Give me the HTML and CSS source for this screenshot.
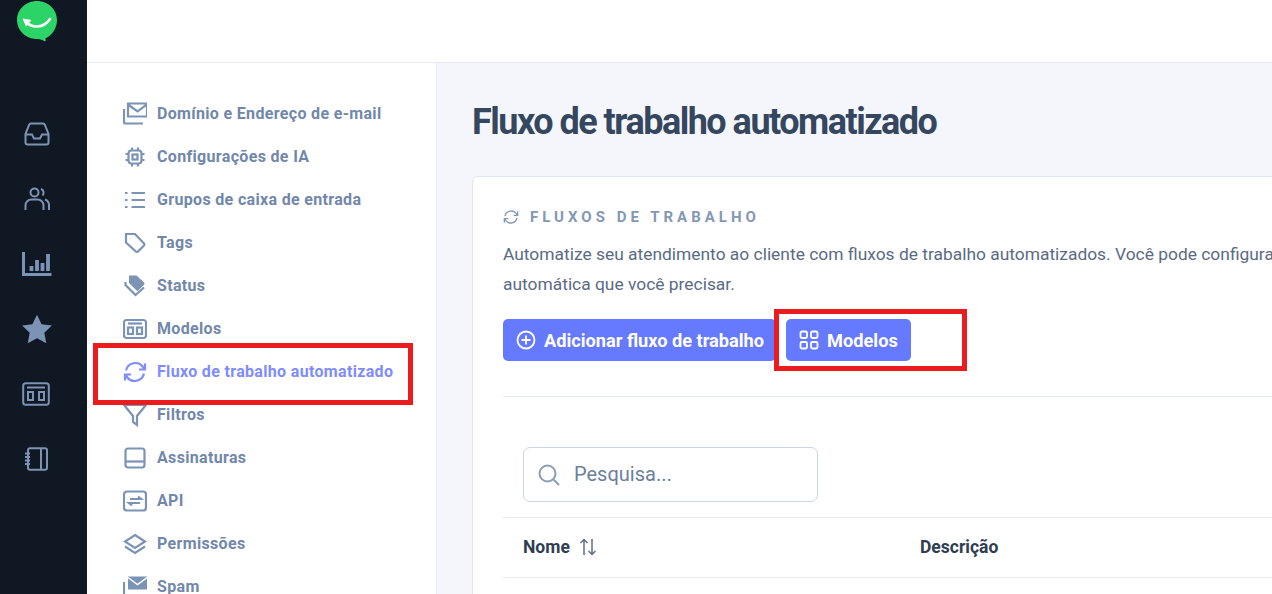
FILE: index.html
```html
<!DOCTYPE html>
<html lang="pt-BR">

<head>
    <meta charset="UTF-8">
    <meta name="viewport" content="width=device-width, initial-scale=1.0">
    <title>Fluxo de trabalho automatizado</title>
    <link rel="stylesheet" href="styles.css">
</head>

<body>
    <div class="app">
        <aside class="rail">
            <svg class="logo" viewBox="0 0 40 42">
                <path d="M20 1C9 1 0 9.500 0 20c0 10.500 9 19 20 19 4 0 5 1 7.500 2.200 .8 .2 1.500-.5 1.200-1.500l-.4-1.200C35 35.500 40 28.500 40 20 40 9.500 31 1 20 1z" fill="#2cd366"/>
                <path d="M9 22c6 6 17 7 24-3" fill="none" stroke="#fff" stroke-width="2.600" stroke-linecap="round"/>
                <path d="M5.500 18.500l9 1.500-5.500 6.500z" fill="#fff"/>
            </svg>
            <nav class="rail-icons">
                <svg viewBox="0 0 26 26"><path d="M7 2.500h12a2 2 0 0 1 1.800 1.200L24.500 13v8.500a2 2 0 0 1-2 2h-19a2 2 0 0 1-2-2V13L5.200 3.700A2 2 0 0 1 7 2.500zM1.500 13.500H8l2 4h6l2-4h6.500"/></svg>
                <svg viewBox="0 0 26 26"><circle cx="10.500" cy="6.500" r="4"/><path d="M1.500 24v-4.500a6 6 0 0 1 6-6h6a6 6 0 0 1 6 6V24M17 3a4 4 0 0 1 1.500 6.500M21 13.500a6 6 0 0 1 4 5.500v5"/></svg>
                <svg viewBox="0 0 30 26" class="rail-wide"><path d="M1.500 1v22.500h28" stroke-width="3"/><path d="M9.500 15v5M15 9v11M20.500 12v8M26 3v17" stroke-width="3.800"/></svg>
                <svg viewBox="0 0 32 30" class="rail-star"><path class="solid" d="M16 1.500l4.300 9 9.700 1.300-7.100 6.800 1.800 9.800L16 23.700l-8.700 4.700 1.800-9.800L2 11.800l9.700-1.300z"/></svg>
                <svg viewBox="0 0 28 24" class="rail-tpl"><rect x="1.200" y="1.200" width="25.600" height="21.600" rx="2.500"/><path d="M5 5.500h18"/><rect x="6" y="10" width="5" height="8"/><rect x="17" y="10" width="5" height="8"/></svg>
                <svg viewBox="0 0 24 24" class="rail-note"><rect x="4" y="1.200" width="19" height="21.600" rx="2"/><path d="M17 1.200v21.600M1 6.500h5M1 10h5M1 13.500h5M1 17h5"/></svg>
            </nav>
        </aside>

        <div class="content">
            <header class="topbar"></header>
            <div class="columns">
                <nav class="settings">
                    <a class="settings-item">
                        <svg viewBox="0 0 24 24"><path d="M5 1.500h19v13H5zM5 2.500l9.500 7 9.500-7M1 7v13.500a1 1 0 0 0 1 1h18"/></svg>
                        Domínio e Endereço de e-mail
                    </a>
                    <a class="settings-item">
                        <svg viewBox="0 0 24 24"><rect x="5.500" y="5.500" width="13" height="13" rx="3"/><rect x="9.500" y="9.500" width="5" height="5"/><path d="M9 2.500v3M15 2.500v3M9 18.500v3M15 18.500v3M2.500 9h3M2.500 15h3M18.500 9h3M18.500 15h3"/></svg>
                        Configurações de IA
                    </a>
                    <a class="settings-item">
                        <svg viewBox="0 0 24 24"><path d="M8.500 5H22M8.500 12H22M8.500 19H22M2 5h2.500M2 12h2.500M2 19h2.500"/></svg>
                        Grupos de caixa de entrada
                    </a>
                    <a class="settings-item">
                        <svg viewBox="0 0 24 24"><path d="M3 3h9l9 9.500a1.500 1.500 0 0 1 0 2L15 20.500a1.500 1.500 0 0 1-2.200 0L3 11.500z"/><path d="M7.500 7.500h.2"/></svg>
                        Tags
                    </a>
                    <a class="settings-item">
                        <svg viewBox="0 0 24 24"><path class="solid" d="M6 1.500h7.500l7.500 7a1.500 1.500 0 0 1 0 2.200l-5.500 5.500a1.500 1.500 0 0 1-2.200 0L6 9z"/><path d="M2.500 8v3l10 10 8.500-7.500"/></svg>
                        Status
                    </a>
                    <a class="settings-item">
                        <svg viewBox="0 0 24 24"><rect x="1" y="3" width="22" height="18" rx="2.500"/><path d="M5 6.500h14"/><rect x="5" y="10.500" width="5" height="6.500"/><rect x="14" y="10.500" width="5" height="6.500"/></svg>
                        Modelos
                    </a>
                    <a class="settings-item is-active">
                        <svg viewBox="0 0 24 24"><path d="M3 10.500A9.500 9.500 0 0 1 20 7l2 2.500M22 3.500v6h-6M21 13.500A9.500 9.500 0 0 1 4 17l-2-2.500M2 20.500v-6h6"/></svg>
                        Fluxo de trabalho automatizado
                    </a>
                    <a class="settings-item">
                        <svg viewBox="0 0 24 24"><path d="M1 2h22l-9 11v9l-4-3v-6z"/></svg>
                        Filtros
                    </a>
                    <a class="settings-item">
                        <svg viewBox="0 0 24 24"><rect x="2.500" y="2.500" width="19" height="19" rx="2.500"/><path d="M2.500 15.500h19"/></svg>
                        Assinaturas
                    </a>
                    <a class="settings-item">
                        <svg viewBox="0 0 24 24"><rect x="1" y="2.500" width="22" height="19" rx="3"/><path d="M7 10h11l-3-2.500M17 14H6l3 2.500"/></svg>
                        API
                    </a>
                    <a class="settings-item">
                        <svg viewBox="0 0 24 24"><path d="M12 3l10 6.500-10 6.500L2 9.500zM2 14.500L12 21l10-6.500"/></svg>
                        Permissões
                    </a>
                    <a class="settings-item">
                        <svg viewBox="0 0 24 24"><path class="solid" d="M5 1.500h19v13H5z"/><path class="cut" d="M5 2.500l9.500 7 9.500-7"/><path d="M1 7v13.500a1 1 0 0 0 1 1h18"/></svg>
                        Spam
                    </a>
                </nav>

                <main class="main">
                    <h1 class="page-title">Fluxo de trabalho automatizado</h1>
                    <section class="card">
                        <h2 class="section-title">
                            <svg viewBox="0 0 24 24"><path d="M3 10.500A9.500 9.500 0 0 1 20 7l2 2.500M22 3.500v6h-6M21 13.500A9.500 9.500 0 0 1 4 17l-2-2.500M2 20.500v-6h6"/></svg>
                            FLUXOS DE TRABALHO
                        </h2>
                        <p class="section-text">Automatize seu atendimento ao cliente com fluxos de trabalho automatizados. Você pode configurar qualquer regra<br>automática que você precisar.</p>
                        <div class="actions">
                            <button class="btn btn-add">
                                <svg viewBox="0 0 20 20"><circle cx="10" cy="10" r="8.500"/><path d="M10 5.500v9M5.500 10h9"/></svg>
                                Adicionar fluxo de trabalho
                            </button>
                            <button class="btn">
                                <svg viewBox="0 0 20 20"><rect x="1.500" y="1.500" width="6.500" height="6.500" rx="1.500"/><rect x="12" y="1.500" width="6.500" height="6.500" rx="1.500"/><rect x="1.500" y="12" width="6.500" height="6.500" rx="1.500"/><rect x="12" y="12" width="6.500" height="6.500" rx="1.500"/></svg>
                                Modelos
                            </button>
                        </div>
                        <div class="search-row">
                            <label class="search">
                                <svg viewBox="0 0 22 22"><circle cx="9.500" cy="9.500" r="8"/><path d="M15.500 15.500l5.500 5.500"/></svg>
                                <span>Pesquisa...</span>
                            </label>
                        </div>
                        <div class="table-head">
                            <div class="col-name">
                                Nome
                                <svg viewBox="0 0 18 18"><path d="M5 17V1.500M1.500 5L5 1.500 8.500 5M13 1v15.500M9.500 13l3.500 3.500 3.500-3.500"/></svg>
                            </div>
                            <div class="col-desc">Descrição</div>
                        </div>
                    </section>
                </main>
            </div>
        </div>
    </div>

    <div class="mark mark-nav"></div>
    <div class="mark mark-btn"></div>
</body>

</html>
```

FILE: styles.css
```css
body {
    font-family: Roboto, "Liberation Sans", sans-serif;
    margin: 0;
    height: 594px;
    overflow: hidden;
    background-color: #fff;
}
svg {
    fill: none;
    stroke: currentColor;
    stroke-width: 2;
    flex-shrink: 0;
}
svg .solid {
    fill: currentColor;
    stroke: none;
}
svg .cut {
    stroke: #fff;
    stroke-width: 1.500;
}
.app {
    display: flex;
    height: 594px;
}
.rail {
    width: 87px;
    flex-shrink: 0;
    background-color: #101824;
    color: #7b93b5;
    display: flex;
    flex-direction: column;
    align-items: center;
}
.logo {
    width: 40px;
    height: 42px;
    stroke: none;
    margin-left: -14px;
}
.rail-icons {
    display: flex;
    flex-direction: column;
    align-items: center;
    margin-top: 79px;
    margin-left: -14px;
}
.rail-icons svg {
    width: 26px;
    height: 26px;
    margin-bottom: 39px;
}
.rail-icons .rail-wide {
    width: 30px;
}
.rail-icons .rail-star {
    width: 34px;
    height: 32px;
    margin-top: -3px;
    margin-bottom: 36px;
}
.rail-icons .rail-tpl {
    width: 28px;
    height: 24px;
    margin: 1px 2px 40px 0;
}
.rail-icons .rail-note {
    width: 24px;
    height: 24px;
    margin: 1px 2px 0 0;
}
.content {
    flex: 1;
    min-width: 0;
    display: flex;
    flex-direction: column;
}
.topbar {
    height: 62px;
    flex-shrink: 0;
    background-color: #fff;
    border-bottom: 1px solid #e6ebf3;
}
.columns {
    flex: 1;
    min-height: 0;
    display: flex;
}
.settings {
    width: 350px;
    flex-shrink: 0;
    box-sizing: border-box;
    padding: 29px 0 0 36px;
    background-color: #fff;
    border-right: 1px solid #e6ebf3;
    overflow: hidden;
}
.settings-item {
    display: flex;
    align-items: center;
    gap: 10px;
    height: 43px;
    font-size: 16px;
    font-weight: 700;
    letter-spacing: .33px;
    color: #7187ab;
    white-space: nowrap;
}
.settings-item svg {
    width: 24px;
    height: 24px;
    stroke-width: 2.200;
    color: #7b93b5;
}
.settings-item.is-active,
.settings-item.is-active svg {
    color: #7f8cff;
}
.main {
    flex: 1;
    min-width: 0;
    background-color: #f4f6fb;
    padding: 0 0 0 35px;
    overflow: hidden;
}
.page-title {
    margin: 38px 0 32px;
    font-size: 36px;
    line-height: 43px;
    font-weight: 700;
    letter-spacing: -1.500px;
    color: #34475f;
    white-space: nowrap;
}
.card {
    width: 1000px;
    box-sizing: border-box;
    height: 500px;
    padding: 30px;
    background-color: #fff;
    border: 1px solid #e1e7f2;
    border-radius: 6px;
}
.section-title {
    display: flex;
    align-items: center;
    gap: 11px;
    margin: 1px 0 13px;
    font-size: 15px;
    line-height: 18px;
    font-weight: 700;
    letter-spacing: 4px;
    color: #8398b5;
}
.section-title svg {
    width: 16px;
    height: 16px;
}
.section-text {
    margin: 0;
    font-size: 17.400px;
    line-height: 30px;
    color: #5a6b84;
    white-space: nowrap;
}
.actions {
    display: flex;
    gap: 10px;
    margin-top: 20px;
    padding-bottom: 35px;
    border-bottom: 1px solid #e6ebf3;
}
.btn {
    display: flex;
    align-items: center;
    gap: 8px;
    height: 42px;
    padding: 0 13px;
    border: none;
    border-radius: 5px;
    background-color: #667aff;
    color: #fff;
    font-family: inherit;
    font-size: 18.200px;
    font-weight: 700;
}
.btn-add {
    padding-right: 12px;
}
.btn svg {
    width: 20px;
    height: 20px;
    stroke-width: 1.800;
}
.search-row {
    padding: 50px 20px 15px;
}
.search {
    display: flex;
    align-items: center;
    gap: 14px;
    width: 295px;
    height: 55px;
    box-sizing: border-box;
    padding-left: 14px;
    border: 1px solid #ccd5e3;
    border-radius: 7px;
    font-size: 20px;
    color: #6b7f9c;
}
.search span {
    padding-bottom: 2px;
}
.search svg {
    width: 22px;
    height: 22px;
    color: #8b9db6;
}
.table-head {
    display: flex;
    align-items: center;
    height: 59px;
    box-sizing: content-box;
    border-top: 1px solid #e6e9f0;
    border-bottom: 1px solid #e6e9f0;
    font-size: 17.500px;
    font-weight: 700;
    color: #2e3d52;
}
.col-name {
    display: flex;
    align-items: center;
    gap: 9px;
    width: 397px;
    margin: 0 0 2px 20px;
}
.col-desc {
    margin-bottom: 2px;
}
.col-name svg {
    width: 18px;
    height: 18px;
    color: #5f708a;
    stroke-width: 1.500;
}
/* red marks drawn on top of the screenshot */
.mark {
    position: absolute;
    box-sizing: border-box;
    border: 5px solid #ea1c20;
}
.mark-nav {
    left: 93px;
    top: 343px;
    width: 320px;
    height: 62px;
}
.mark-btn {
    left: 774px;
    top: 309px;
    width: 193px;
    height: 62px;
}
```
